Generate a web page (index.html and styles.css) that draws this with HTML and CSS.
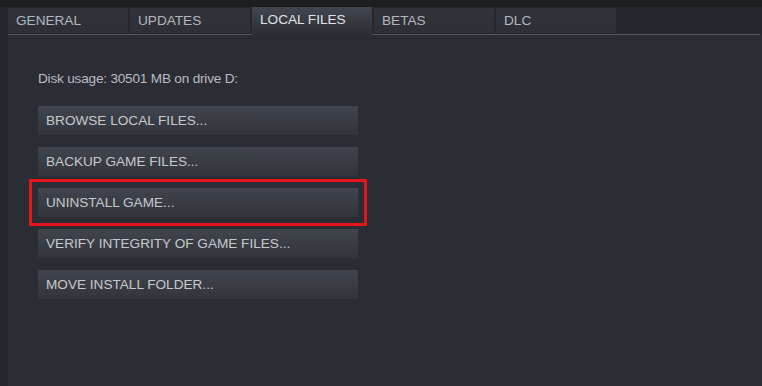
FILE: index.html
```html
<!DOCTYPE html>
<html>
<head>
<meta charset="utf-8">
<link rel="stylesheet" href="styles.css">
</head>
<body>
<div class="topstrip"></div>
<div class="window">
  <div class="tabs">
    <div class="tab">GENERAL</div>
    <div class="tab">UPDATES</div>
    <div class="tab active">LOCAL FILES</div>
    <div class="tab">BETAS</div>
    <div class="tab">DLC</div>
  </div>
  <div class="panel">
    <p class="disk">Disk usage: 30501 MB on drive D:</p>
    <div class="buttons">
      <div class="btn">BROWSE LOCAL FILES...</div>
      <div class="btn">BACKUP GAME FILES...</div>
      <div class="btn highlight">UNINSTALL GAME...</div>
      <div class="btn">VERIFY INTEGRITY OF GAME FILES...</div>
      <div class="btn">MOVE INSTALL FOLDER...</div>
    </div>
  </div>
</div>
</body>
</html>
```
FILE: styles.css
```css
html, body {
  margin: 0;
  padding: 0;
  height: 100%;
}
body {
  background: #24272c;
  font-family: "Liberation Sans", Arial, sans-serif;
  font-size: 13.6px;
  overflow: hidden;
}
.topstrip {
  height: 7px;
  background: #1d1f23;
}
.window {
  padding-left: 8px;
  display: flex;
  flex-direction: column;
  height: calc(100% - 7px);
}
.tabs {
  display: flex;
  gap: 2px;
  height: 27px;
  border-bottom: 1px solid #52565d;
  margin-right: 2px;
}
.tab {
  width: 120px;
  height: 25px;
  margin-top: 1px;
  box-sizing: border-box;
  padding-left: 8px;
  line-height: 25px;
  color: #b3b7bd;
  background: linear-gradient(#30333a, #2d3036);
}
.tab.active {
  height: 28px;
  margin-top: 0;
  line-height: 26px;
  color: #e0e3e7;
  background: linear-gradient(#42464e, #2b2e34);
  position: relative;
  z-index: 1;
}
.panel {
  flex: 1;
  background: #2a2d33;
  padding-left: 30px;
}
.disk {
  margin: 36px 0 0;
  line-height: 16px;
  color: #b9bdc2;
  letter-spacing: -0.2px;
}
.buttons {
  display: flex;
  flex-direction: column;
  gap: 12px;
  margin-top: 19px;
}
.btn {
  width: 320px;
  height: 29px;
  box-sizing: border-box;
  padding-left: 8px;
  line-height: 29px;
  color: #c5c9ce;
  background: linear-gradient(#40444c, #32353b);
}
.btn.highlight {
  outline: 3px solid #e8141b;
  outline-offset: 6px;
}
```
